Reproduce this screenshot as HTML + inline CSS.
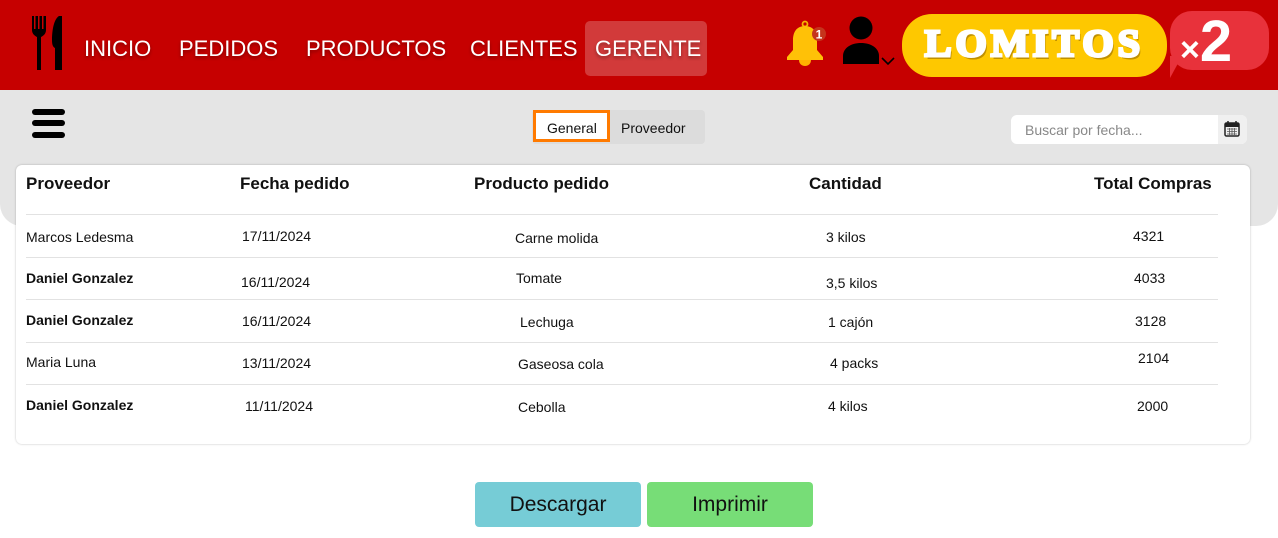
<!DOCTYPE html>
<html><head><meta charset="utf-8"><style>
*{margin:0;padding:0;box-sizing:border-box}
body{width:1278px;height:538px;background:#fff;font-family:"Liberation Sans",sans-serif;position:relative;overflow:hidden}
.hdr{position:absolute;left:0;top:0;width:1278px;height:90px;background:#c60000}
.nav{position:absolute;top:36px;color:#fff;font-size:22px;text-shadow:0 2px 3px rgba(0,0,0,.35)}
.ger{position:absolute;left:585px;top:21px;width:122px;height:55px;background:#d23a3a;border-radius:5px}
.gray{position:absolute;left:0;top:90px;width:1278px;height:136px;background:#e5e5e5;border-radius:0 0 22px 22px}
.card{position:absolute;left:16px;top:165px;width:1234px;height:279px;background:#fff;border-radius:6px;box-shadow:0 0 2px rgba(0,0,0,.25)}
.t{position:absolute;font-size:14px;color:#111}
.b{font-weight:bold}
.h{position:absolute;font-size:17px;color:#111;top:174px;font-weight:bold}
.ln{position:absolute;left:26px;width:1192px;height:1px;background:#e2e2e2}
.btn{position:absolute;top:482px;width:166px;height:45px;border-radius:4px;font-size:21px;color:#111;text-align:center;line-height:45px}
</style></head><body>
<div class="hdr"></div>
<svg style="position:absolute;left:30px;top:15px" width="34" height="56" viewBox="0 0 34 56">
<path d="M2 1v14c0 4 3 6 5 7v33h4V22c2-1 5-3 5-7V1h-2.5v13h-1.5V1h-2.5v13H8V1H5.5v13H4V1z" fill="#000"/>
<path d="M25 55V33c-2-1-3-3-3-8 0-10 2-21 7-24h3v54z" fill="#000"/>
</svg>
<div class="ger"></div>
<div class="nav" style="left:84px">INICIO</div>
<div class="nav" style="left:179px">PEDIDOS</div>
<div class="nav" style="left:306px">PRODUCTOS</div>
<div class="nav" style="left:470px">CLIENTES</div>
<div class="nav" style="left:595px">GERENTE</div>
<svg style="position:absolute;left:783px;top:20px" width="46" height="48" viewBox="0 0 46 48">
<circle cx="22" cy="4" r="2.5" fill="none" stroke="#f5b800" stroke-width="1.8"/>
<path d="M22 6c-9 0-12 7-12 14v10l-6 7v3h36v-3l-6-7V20c0-7-3-14-12-14z" fill="#ffc107"/>
<path d="M16 40h12c0 4-3 6-6 6s-6-2-6-6z" fill="#ffb000"/>
<circle cx="36" cy="14" r="7" fill="#c5341c"/>
<text x="36" y="18.5" font-size="12" font-weight="bold" fill="#fff" text-anchor="middle" font-family="Liberation Sans">1</text>
</svg>
<svg style="position:absolute;left:840px;top:16px" width="60" height="50" viewBox="0 0 60 50">
<circle cx="21" cy="12" r="11.5" fill="#000"/>
<path d="M3 48V40c0-8 8-13 18-13s18 5 18 13v8z" fill="#000"/>
<path d="M42 42l6 6 6-6" fill="none" stroke="#000" stroke-width="1.6"/>
</svg>
<div style="position:absolute;left:902px;top:14px;width:265px;height:63px;background:#fec800;border-radius:30px"></div>
<div style="position:absolute;left:902px;top:22px;width:265px;text-align:center;font-family:'Liberation Serif',serif;font-weight:bold;font-size:38px;letter-spacing:4px;color:#fff;-webkit-text-stroke:3px #fff;text-shadow:2px 3px 0 #c09000"><span style="display:inline-block;transform:scaleX(1.05)">LOMITOS</span></div>
<div style="position:absolute;left:1170px;top:11px;width:99px;height:59px;background:#e8323b;border-radius:22px"></div>
<div style="position:absolute;left:1170px;top:56px;width:0;height:0;border-left:12px solid #e8323b;border-bottom:22px solid transparent"></div>
<div style="position:absolute;left:1180px;top:8px;font-weight:bold;color:#fff;font-size:58px"><span style="font-size:34px">×</span>2</div>
<div class="gray"></div>
<div style="position:absolute;left:32px;top:109px;width:33px;height:6px;background:#000;border-radius:3px"></div>
<div style="position:absolute;left:32px;top:120px;width:33px;height:6px;background:#000;border-radius:3px"></div>
<div style="position:absolute;left:32px;top:132px;width:33px;height:6px;background:#000;border-radius:3px"></div>
<div style="position:absolute;left:532px;top:110px;width:173px;height:34px;background:#dcdcdc;border-radius:4px"></div>
<div style="position:absolute;left:533px;top:110px;width:77px;height:32px;background:#fff;border:3px solid #ff7a00"></div>
<div class="t" style="left:547px;top:120px;font-size:14px">General</div>
<div class="t" style="left:621px;top:120px;font-size:14px">Proveedor</div>
<div style="position:absolute;left:1011px;top:115px;width:236px;height:29px;background:#fff;border-radius:6px"></div>
<div style="position:absolute;left:1218px;top:115px;width:29px;height:29px;background:#f0f0f0;border-radius:0 6px 6px 0"></div>
<div class="t" style="left:1025px;top:122px;color:#888;font-size:14px">Buscar por fecha...</div>
<svg style="position:absolute;left:1224px;top:121px" width="16" height="16" viewBox="0 0 16 16"><rect x="1" y="2" width="14" height="13" rx="1.5" fill="none" stroke="#222" stroke-width="1.5"/><rect x="1" y="2" width="14" height="4" fill="#222"/><path d="M4 0v3M12 0v3" stroke="#222" stroke-width="1.5"/><path d="M3 8h10M3 10.5h10M3 13h10M5.5 7v7M8 7v7M10.5 7v7" stroke="#555" stroke-width=".8"/></svg>
<div class="card"></div>
<div class="h" style="left:26px">Proveedor</div>
<div class="h" style="left:240px">Fecha pedido</div>
<div class="h" style="left:474px">Producto pedido</div>
<div class="h" style="left:809px">Cantidad</div>
<div class="h" style="left:1094px">Total Compras</div>
<div class="ln" style="top:214px"></div>
<div class="ln" style="top:257px"></div>
<div class="ln" style="top:299px"></div>
<div class="ln" style="top:342px"></div>
<div class="ln" style="top:384px"></div>
<div class="t" style="left:26px;top:229px">Marcos Ledesma</div>
<div class="t b" style="left:26px;top:270px">Daniel Gonzalez</div>
<div class="t b" style="left:26px;top:312px">Daniel Gonzalez</div>
<div class="t" style="left:26px;top:354px">Maria Luna</div>
<div class="t b" style="left:26px;top:397px">Daniel Gonzalez</div>
<div class="t" style="left:242px;top:228px">17/11/2024</div>
<div class="t" style="left:241px;top:274px">16/11/2024</div>
<div class="t" style="left:242px;top:313px">16/11/2024</div>
<div class="t" style="left:242px;top:355px">13/11/2024</div>
<div class="t" style="left:245px;top:398px">11/11/2024</div>
<div class="t" style="left:515px;top:230px">Carne molida</div>
<div class="t" style="left:516px;top:270px">Tomate</div>
<div class="t" style="left:520px;top:314px">Lechuga</div>
<div class="t" style="left:518px;top:356px">Gaseosa cola</div>
<div class="t" style="left:518px;top:399px">Cebolla</div>
<div class="t" style="left:826px;top:229px">3 kilos</div>
<div class="t" style="left:826px;top:275px">3,5 kilos</div>
<div class="t" style="left:828px;top:314px">1 cajón</div>
<div class="t" style="left:830px;top:355px">4 packs</div>
<div class="t" style="left:828px;top:398px">4 kilos</div>
<div class="t" style="left:1133px;top:228px">4321</div>
<div class="t" style="left:1134px;top:270px">4033</div>
<div class="t" style="left:1135px;top:313px">3128</div>
<div class="t" style="left:1138px;top:350px">2104</div>
<div class="t" style="left:1137px;top:398px">2000</div>
<div class="btn" style="left:475px;background:#76ccd6">Descargar</div>
<div class="btn" style="left:647px;background:#77dd77">Imprimir</div>
</body></html>
